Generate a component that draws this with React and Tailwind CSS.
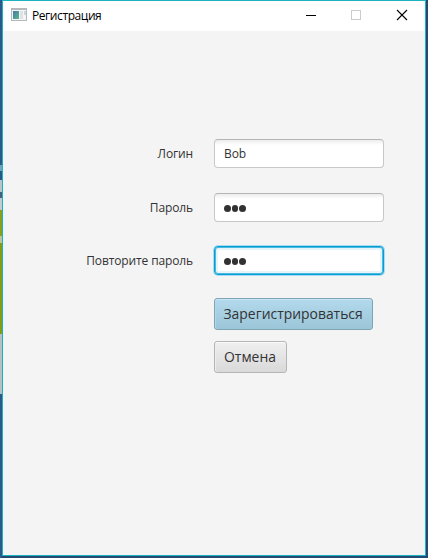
import React from "react";

const fieldBase = "flex h-[29px] w-[170px] items-center rounded-[4px] border px-[8px] text-[12px] text-[#323232]";
const plainField = "border-[#c8c8c8] border-t-[#b5b5b5] bg-[linear-gradient(to_bottom,#ececec_0,#ffffff_5px)]";
const focusedField = "border-[#039ed3] bg-white shadow-[0_0_0_1px_#a9dcf0,inset_0_0_0_1px_#4cb9e0,inset_0_0_0_3px_#e6f4fa]";

function Dots() {
  return <span className="flex gap-[1px] pt-[2px] pl-px">
    {[0, 1, 2].map((i) => <i key={i} className="h-[7px] w-[6.5px] rounded-full bg-[#323232]" />)}
  </span>;
}

function Row({ label, focused, children, className }) {
  return (
    <div className={"flex items-center " + className}>
      <label className="w-[190px] text-right text-[12px] leading-[16px] tracking-[-0.13px] whitespace-nowrap text-[#333333]">{label}</label>
      <div className={"ml-[21px] " + fieldBase + " " + (focused ? focusedField : plainField)}>{children}</div>
    </div>
  );
}

export default function App() {
  return (
    <div className="flex h-[558px] w-[428px] bg-[#234a72] font-['Open_Sans','Noto_Sans',sans-serif]">
      <div className="flex w-[2px] flex-col">
        <i className="h-[165px] bg-[#285a8c]" />
        <i className="h-[6px] bg-[#6fa6b8]" />
        <i className="h-[9px] bg-[#245a88]" />
        <i className="h-[12px] bg-[#b9c4c8]" />
        <i className="h-[6px] bg-[#44617a]" />
        <i className="h-[12px] bg-[#c2ccd0]" />
        <i className="h-[26px] bg-[#86a01c]" />
        <i className="h-[7px] bg-[#b8c79c]" />
        <i className="h-[91px] bg-[#829c14]" />
        <i className="h-[60px] bg-[#b4c2c8]" />
        <i className="flex-1 bg-[#285a8c]" />
      </div>
      <main className="flex h-[556px] w-[424px] flex-col border border-[#1cb3c0] bg-[#f4f4f4]">
        <header className="flex h-[30px] shrink-0 items-center bg-white">
          <svg className="mb-[3px] ml-[8px] h-[13px] w-[16px]" viewBox="0 0 16 13" shapeRendering="crispEdges">
            <defs><linearGradient id="pane" x1="0" y1="0" x2="1" y2="1"><stop stopColor="#4b79ad" /><stop offset="1" stopColor="#57b686" /></linearGradient></defs>
            <path d="M0 0h16v13H0z" fill="#b5b9bd" />
            <path d="M1 2h14v10H1z" fill="#f5f5f5" />
            <path d="M2 3h6v8H2z" fill="url(#pane)" />
            <path d="M9 3h3v8H9z" fill="#dde2e6" />
            <path d="M13 3h2v4h-2z" fill="#cbd8d6" />
          </svg>
          <h1 className="ml-[5px] w-[70px] text-[12px] leading-[16px] tracking-[-0.42px] whitespace-nowrap text-black">Регистрация</h1>
          <svg className="mr-[17px] mb-[2px] ml-auto h-[12px] w-[102px]" viewBox="0 0 102 12" fill="none" shapeRendering="crispEdges">
            <path d="M0 6.5h10" stroke="#000" />
            <path d="M45.5 1.5h9v9h-9z" stroke="#cccccc" />
            <path d="m91 1 10 10M101 1 91 11" stroke="#000" strokeWidth="1.1" shapeRendering="auto" />
          </svg>
        </header>
        <Row label="Логин" className="mt-[108px]"><span className="pl-px tracking-[-0.1px]">Bob</span></Row>
        <Row label="Пароль" className="mt-[25px]"><Dots /></Row>
        <Row label="Повторите пароль" focused className="mt-[24px]"><Dots /></Row>
        <div className="mt-[23px] ml-[211px] flex flex-col items-start gap-[11px] text-[15px] text-[#333333]">
          <button className="flex h-[32px] w-[159px] items-center justify-center rounded-[3px] border border-[#7fa5b5] bg-[linear-gradient(to_bottom,#b3d9ec,#9bc5d8)] pb-[2px] whitespace-nowrap shadow-[inset_0_1px_0_#c8e6f3,inset_1px_0_0_#b5d8e7]"><span className="scale-x-[0.927]">Зарегистрироваться</span></button>
          <button className="flex h-[32px] w-[73px] items-center justify-center rounded-[3px] border border-[#b5b5b5] bg-[linear-gradient(to_bottom,#efefef,#d9d9d9)] pr-[2px] pb-[2px] whitespace-nowrap shadow-[inset_0_1px_0_#fafafa,inset_1px_0_0_#ececec]"><span className="scale-x-[0.927]">Отмена</span></button>
        </div>
      </main>
    </div>
  );
}
